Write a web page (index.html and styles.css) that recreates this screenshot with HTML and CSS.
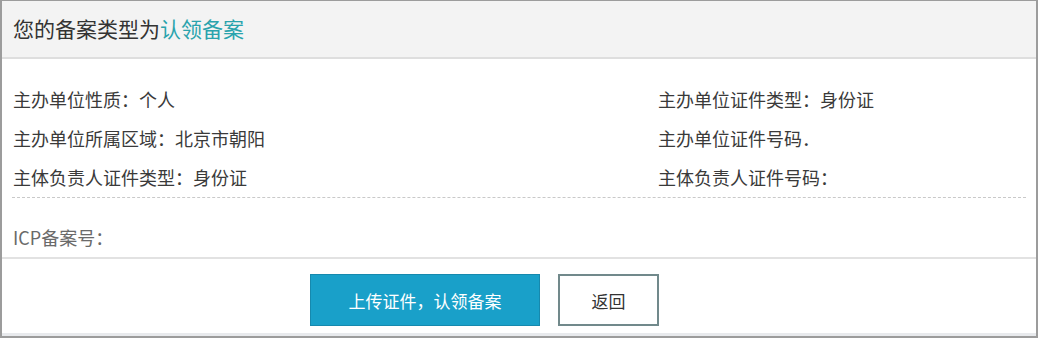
FILE: index.html
```html
<!DOCTYPE html>
<html lang="zh-CN">
<head>
<meta charset="utf-8">
<title>备案类型</title>
<link rel="stylesheet" href="styles.css">
</head>
<body>
<div class="panel">
  <div class="panel-head">您的备案类型为<span class="accent">认领备案</span></div>
  <div class="panel-body">
    <div class="info-grid">
      <div class="info-item">主办单位性质：个人</div>
      <div class="info-item">主办单位证件类型：身份证</div>
      <div class="info-item">主办单位所属区域：北京市朝阳</div>
      <div class="info-item">主办单位证件号码．</div>
      <div class="info-item">主体负责人证件类型：身份证</div>
      <div class="info-item">主体负责人证件号码：</div>
    </div>
    <div class="icp">ICP备案号：</div>
  </div>
  <div class="panel-foot">
    <button class="btn btn-primary">上传证件，认领备案</button>
    <button class="btn btn-default">返回</button>
  </div>
</div>
</body>
</html>
```

FILE: styles.css
```css
html, body {
  margin: 0;
  padding: 0;
  background: #ffffff;
}

body {
  font-family: "Noto Sans CJK SC", "Microsoft YaHei", sans-serif;
  color: #3a3a3a;
}

.panel {
  box-sizing: border-box;
  width: 1038px;
  height: 338px;
  border: 2px solid #9c9c9c;
  border-top-width: 1px;
  background: #ffffff;
  display: flex;
  flex-direction: column;
}

.panel-head {
  height: 56px;
  line-height: 55px;
  padding-left: 11px;
  background: #f3f3f3;
  border-bottom: 2px solid #dedede;
  font-size: 21px;
  color: #333333;
}

.accent {
  color: #2aa3ad;
}

.panel-body {
  padding: 0 10px;
  border-bottom: 2px solid #e2e2e2;
}

.info-grid {
  display: grid;
  grid-template-columns: 645px 1fr;
  padding: 21px 0 0 1px;
  border-bottom: 1px dashed #c9c9c9;
  font-size: 18px;
  line-height: 39px;
}

.info-item {
  white-space: nowrap;
}

.icp {
  margin-top: 20px;
  padding-left: 1px;
  line-height: 39px;
  font-size: 18px;
  color: #6a6a6a;
}

.panel-foot {
  flex: 1;
  display: flex;
  align-items: flex-start;
  gap: 18px;
  padding: 15px 0 0 308px;
  border-bottom: 3px solid #e8eaed;
}

.btn {
  box-sizing: border-box;
  height: 52px;
  font-family: inherit;
  font-size: 17px;
  cursor: pointer;
}

.btn-primary {
  width: 230px;
  background: #19a0c9;
  border: 1px solid #1689ae;
  color: #ffffff;
}

.btn-default {
  width: 101px;
  background: #ffffff;
  border: 2px solid #71898b;
  color: #333333;
}
```
